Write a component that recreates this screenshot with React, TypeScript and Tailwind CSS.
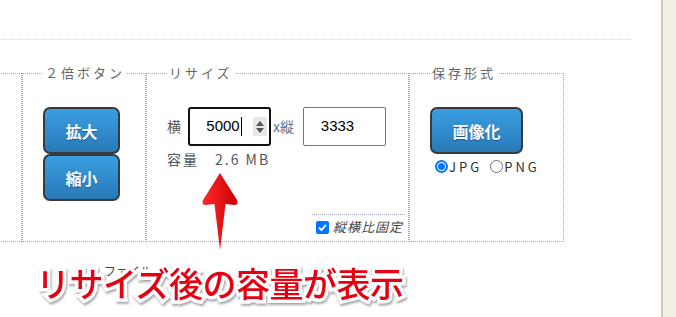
import React from 'react';

const jp = "font-['Noto_Sans_CJK_JP','Liberation_Sans',sans-serif]";

const BlueButton: React.FC<{ label: string; className?: string }> = ({ label, className = '' }) => (
    <button
        className={`flex h-[47px] items-center justify-center rounded-[7px] border-2 border-[#3a3a3a] bg-gradient-to-b from-[#3a9fe2] to-[#2979b8] text-[16px] font-bold text-white [text-shadow:0_1px_1px_rgba(0,0,0,0.35)] ${jp} ${className}`}
    >
        {label}
    </button>
);

const Radio: React.FC<{ checked?: boolean }> = ({ checked }) =>
    checked ? (
        <span className="flex h-[13px] w-[13px] items-center justify-center rounded-full border-2 border-[#0075ff]">
            <span className="h-[7px] w-[7px] rounded-full bg-[#0075ff]" />
        </span>
    ) : (
        <span className="h-[13px] w-[13px] rounded-full border border-[#767676]" />
    );

export default function App() {
    return (
        <div className="flex h-[317px] w-[676px] overflow-hidden bg-white">
            <div className="relative w-[661px] bg-white">
                {/* header divider */}
                <div className="h-[40px] w-[631px] border-b border-dotted border-[#ecdc70]" />

                {/* option fieldsets */}
                <div className="mt-[25px] flex">
                    <fieldset className="ml-[-20px] h-[177px] w-[42px] border border-dotted border-[#9ea7b7]">
                        <legend className="h-[16px]" />
                    </fieldset>

                    <fieldset className="h-[177px] w-[124px] border border-dotted border-[#9ea7b7] pl-[20px]">
                        <legend className={`px-[2px] text-[13px] leading-[16px] tracking-[3px] text-[#666] ${jp}`}>２倍ボタン</legend>
                        <div className="mt-[26px] flex flex-col">
                            <BlueButton label="拡大" className="w-[77px]" />
                            <BlueButton label="縮小" className="w-[77px]" />
                        </div>
                    </fieldset>

                    <fieldset className="h-[177px] w-[263px] border border-dotted border-[#9ea7b7] pl-[20px] pr-[1px]">
                        <legend className={`px-[2px] text-[13px] leading-[16px] tracking-[3px] text-[#666] ${jp}`}>リサイズ</legend>
                        <div className="flex h-[159px] flex-col">
                            <div className="mt-[26px] flex items-center">
                                <span className={`w-[21px] text-[14px] text-[#555] ${jp}`}>横</span>
                                <div className="flex h-[39px] w-[83px] items-center rounded-[3px] border-2 border-[#111] pl-[2px] pr-[2px]">
                                    <span className="flex flex-1 items-center justify-center pl-[3px] font-['Liberation_Sans',sans-serif] text-[15px] text-black">
                                        5000<span className="ml-[1px] h-[19px] w-[1px] bg-black" />
                                    </span>
                                    <span className="flex h-[19px] w-[14px] flex-col items-center justify-center gap-[2px] bg-[#e8e8e8]">
                                        <span className="h-0 w-0 border-x-[4px] border-b-[5px] border-x-transparent border-b-[#555]" />
                                        <span className="h-0 w-0 border-x-[4px] border-t-[5px] border-x-transparent border-t-[#555]" />
                                    </span>
                                </div>
                                <span className={`ml-[2px] w-[30px] text-[14px] text-[#5a6f93] ${jp}`}>x縦</span>
                                <div className="flex h-[39px] w-[83px] items-center justify-center rounded-[2px] border border-[#767676] pr-[14px] font-['Liberation_Sans',sans-serif] text-[15px] text-black">
                                    3333
                                </div>
                            </div>
                            <div className={`mt-[3px] text-[14px] leading-[20px] tracking-[2px] text-[#555] ${jp}`}>
                                容量　2.6 MB
                            </div>
                            <div className="mt-auto mb-[5px] mr-[2px] flex items-center self-end border-t border-dotted border-[#9ea7b7] pl-[4px] pr-[2px] pt-[4px]">
                                <span className="flex h-[13px] w-[13px] items-center justify-center rounded-[2px] bg-[#0075ff]">
                                    <svg viewBox="0 0 12 12" className="h-[11px] w-[11px]">
                                        <path d="M2.2 6.2 L4.9 8.8 L9.8 3.2" fill="none" stroke="white" strokeWidth="2" />
                                    </svg>
                                </span>
                                <span className={`ml-[4px] text-[13px] italic leading-[16px] tracking-[1px] text-[#444] ${jp}`}>縦横比固定</span>
                            </div>
                        </div>
                    </fieldset>

                    <fieldset className="h-[177px] w-[155px] border border-dotted border-[#9ea7b7] pl-[20px]">
                        <legend className={`px-[2px] text-[13px] leading-[16px] tracking-[3px] text-[#666] ${jp}`}>保存形式</legend>
                        <BlueButton label="画像化" className="mt-[26px] w-[93px]" />
                        <div className={`mt-[3px] flex items-center pl-[5px] text-[13px] tracking-[3px] text-[#333] ${jp}`}>
                            <Radio checked />
                            <span className="ml-[1px]">JPG</span>
                            <span className="ml-[8px]" />
                            <Radio />
                            <span className="ml-[1px]">PNG</span>
                        </div>
                    </fieldset>
                </div>

                {/* underlying page text, mostly hidden */}
                <p className={`mt-[22px] pl-[104px] text-[12px] leading-[14px] text-[#444] ${jp}`}>ファイル</p>

                {/* annotation arrow */}
                <svg className="absolute left-[200px] top-[170px]" width="40" height="82" viewBox="0 0 40 82">
                    <defs>
                        <linearGradient id="ar" x1="0" x2="1" y1="0" y2="0">
                            <stop offset="0" stopColor="#ff2a2a" />
                            <stop offset="1" stopColor="#c80000" />
                        </linearGradient>
                    </defs>
                    <path
                        d="M20 3 L37 30 Q39 35 34 35 L25.5 34 L20 80 L14.5 34 L6 35 Q1 35 3 30 Z"
                        fill="url(#ar)"
                    />
                </svg>

                {/* annotation caption */}
                <div
                    className={`absolute left-[36px] top-[261px] text-[34px] font-medium leading-[44px] tracking-[-0.5px] text-[#e60012] [-webkit-text-stroke:7px_white] [paint-order:stroke_fill] [filter:drop-shadow(1px_2px_1px_rgba(0,0,0,0.35))] ${jp}`}
                >
                    リサイズ後の容量が表示
                </div>
            </div>
            <div className="w-[2px] bg-[#cdc9c1]" />
            <div className="flex-1 bg-[#f2efe7]" />
        </div>
    );
}
